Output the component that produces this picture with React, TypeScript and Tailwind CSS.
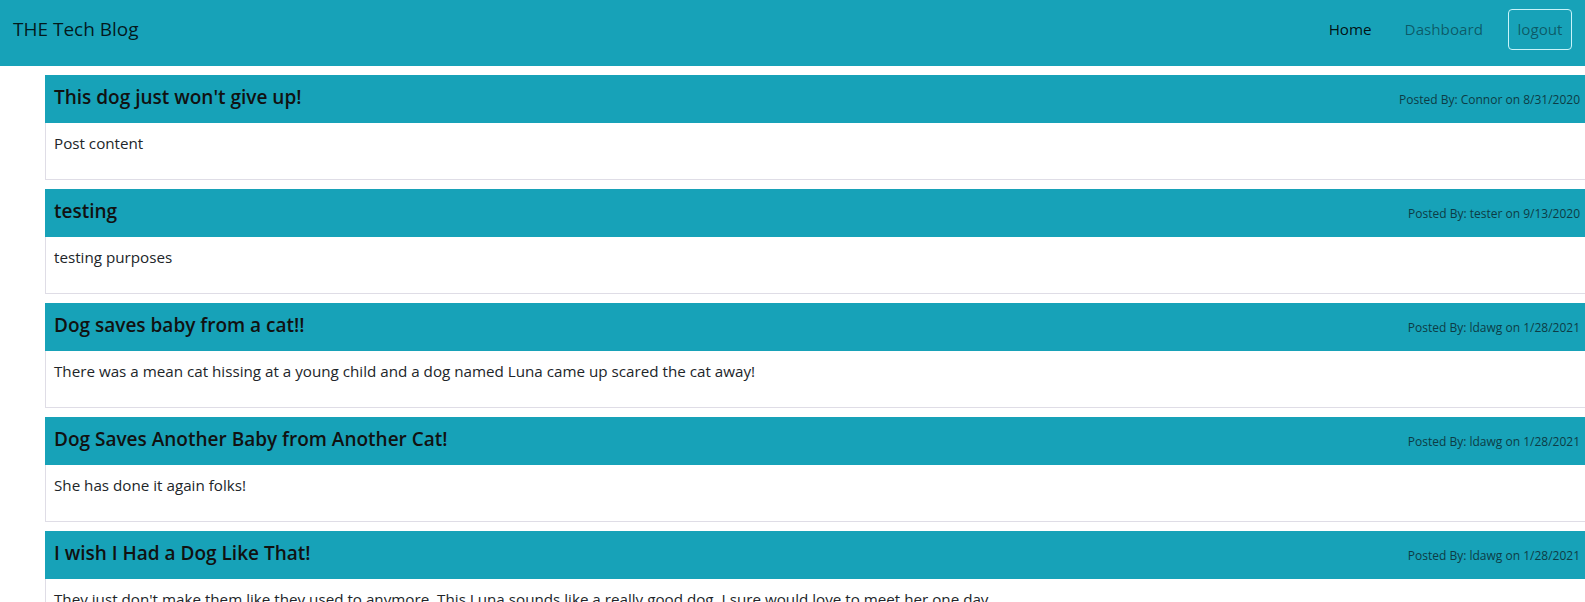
import React from 'react';

interface Post {
  title: string;
  author: string;
  date: string;
  content: string;
}

const posts: Post[] = [
  { title: "This dog just won't give up!", author: 'Connor', date: '8/31/2020', content: 'Post content' },
  { title: 'testing', author: 'tester', date: '9/13/2020', content: 'testing purposes' },
  {
    title: 'Dog saves baby from a cat!!',
    author: 'ldawg',
    date: '1/28/2021',
    content: 'There was a mean cat hissing at a young child and a dog named Luna came up scared the cat away!',
  },
  { title: 'Dog Saves Another Baby from Another Cat!', author: 'ldawg', date: '1/28/2021', content: 'She has done it again folks!' },
  {
    title: 'I wish I Had a Dog Like That!',
    author: 'ldawg',
    date: '1/28/2021',
    content: "They just don't make them like they used to anymore. This Luna sounds like a really good dog. I sure would love to meet her one day.",
  },
];

const PostCard: React.FC<{ post: Post }> = ({ post }) => (
  <div className="mb-[9px]">
    <div className="h-[48px] bg-[#17a2b8] px-[9px] flex items-baseline justify-between pt-[10px]">
      <h5 className="text-[19px] leading-[24px] font-semibold text-[#111]">{post.title}</h5>
      <small className="text-[12px] text-[#0d3c45]">
        Posted By: {post.author} on {post.date}
      </small>
    </div>
    <div className="border-x border-b border-[#dfdde6] px-[8px] pt-[8px] pb-[24px]">
      <p className="text-[15.2px] leading-[24px] text-[#212529]">{post.content}</p>
    </div>
  </div>
);

export default function App() {
  return (
    <div className="h-screen w-full overflow-hidden bg-white" style={{ fontFamily: '"Segoe UI", "Open Sans", "Noto Sans", sans-serif' }}>
      <nav className="h-[66px] bg-[#17a2b8] flex items-center justify-between pl-[13px] pr-[13px] pb-[8px]">
        <a className="text-[19px] text-black/85">THE Tech Blog</a>
        <div className="flex items-center">
          <a className="text-[15.2px] text-black/90">Home</a>
          <a className="ml-[33px] text-[15.2px] text-black/45">Dashboard</a>
          <button className="ml-[25px] h-[41px] w-[64px] rounded-[4px] border border-[#c8f4fa] text-[15.2px] text-black/45">
            logout
          </button>
        </div>
      </nav>
      <main className="mt-[9px] pl-[45px] mr-[-4px]">
        {posts.map((post) => (
          <PostCard key={post.title} post={post} />
        ))}
      </main>
    </div>
  );
}
